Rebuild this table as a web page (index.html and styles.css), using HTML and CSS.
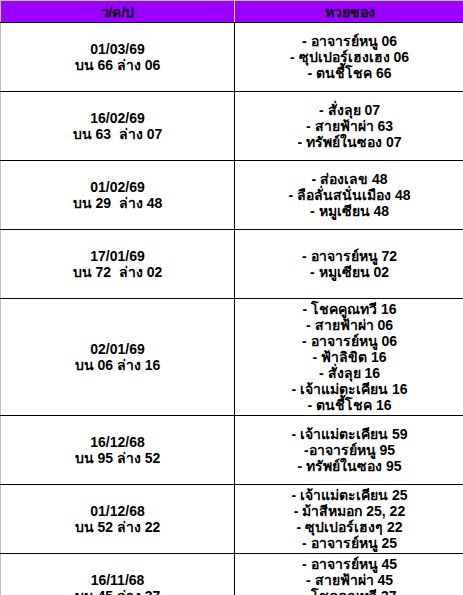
FILE: index.html
```html
<!DOCTYPE html>
<html lang="th">
<head>
<meta charset="utf-8">
<title>หวยซอง</title>
<link rel="stylesheet" href="styles.css">
</head>
<body>
<table class="sheet">
  <colgroup><col class="c-date"><col class="c-tips"></colgroup>
  <thead>
    <tr class="head"><th>ว/ด/ป</th><th>หวยซอง</th></tr>
  </thead>
  <tbody>
    <tr><td class="date">01/03/69<br>บน 66 ล่าง 06</td><td>- อาจารย์หนู 06<br>- ซุปเปอร์เฮงเฮง 06<br>- ตนชี้โชค 66</td></tr>
    <tr><td class="date">16/02/69<br>บน 63&nbsp; ล่าง 07</td><td>- สั่งลุย 07<br>- สายฟ้าผ่า 63<br>- ทรัพย์ในซอง 07</td></tr>
    <tr><td class="date">01/02/69<br>บน 29&nbsp; ล่าง 48</td><td>- ส่องเลข 48<br>- ลือลั่นสนั่นเมือง 48<br>- หมูเซียน 48</td></tr>
    <tr><td class="date">17/01/69<br>บน 72&nbsp; ล่าง 02</td><td>- อาจารย์หนู 72<br>- หมูเซียน 02</td></tr>
    <tr><td class="date">02/01/69<br>บน 06 ล่าง 16</td><td>- โชคคูณทวี 16<br>- สายฟ้าผ่า 06<br>- อาจารย์หนู 06<br>- ฟ้าลิขิต 16<br>- สั่งลุย 16<br>- เจ้าแม่ตะเคียน 16<br>- ตนชี้โชค 16</td></tr>
    <tr><td class="date">16/12/68<br>บน 95 ล่าง 52</td><td>- เจ้าแม่ตะเคียน 59<br>-อาจารย์หนู 95<br>- ทรัพย์ในซอง 95</td></tr>
    <tr><td class="date">01/12/68<br>บน 52 ล่าง 22</td><td>- เจ้าแม่ตะเคียน 25<br>- ม้าสีหมอก 25, 22<br>- ซุปเปอร์เฮงๆ 22<br>- อาจารย์หนู 25</td></tr>
    <tr><td class="date">16/11/68<br>บน 45 ล่าง 37</td><td>- อาจารย์หนู 45<br>- สายฟ้าผ่า 45<br>- โชคคูณทวี 37<br>- ฟ้าลิขิต 37</td></tr>
  </tbody>
</table>
</body>
</html>
```

FILE: styles.css
```css
html, body {
  margin: 0;
  padding: 0;
  background: #ffffff;
}

.sheet {
  border-collapse: collapse;
  table-layout: fixed;
  width: 464px;
  font-family: Arial, "Liberation Sans", sans-serif;
  font-size: 14px;
  font-weight: bold;
  color: #000000;
}

.c-date { width: 234px; }
.c-tips { width: 230px; }

.sheet th,
.sheet td {
  border: 1px solid #000000;
  padding: 2px 3px;
  text-align: center;
  vertical-align: middle;
  line-height: 16px;
  overflow: hidden;
  white-space: nowrap;
}

.sheet td {
  height: 64px;
}

.head th {
  background: #9900ff;
  color: #000000;
  height: 17px;
  padding: 2px 3px;
  border-top-color: #c0c0c0;
  border-right-color: #d9d9d9;
  border-bottom-color: #000000;
  font-weight: bold;
}

.sheet th:first-child,
.sheet td:first-child {
  border-left-color: #c0c0c0;
}
```
